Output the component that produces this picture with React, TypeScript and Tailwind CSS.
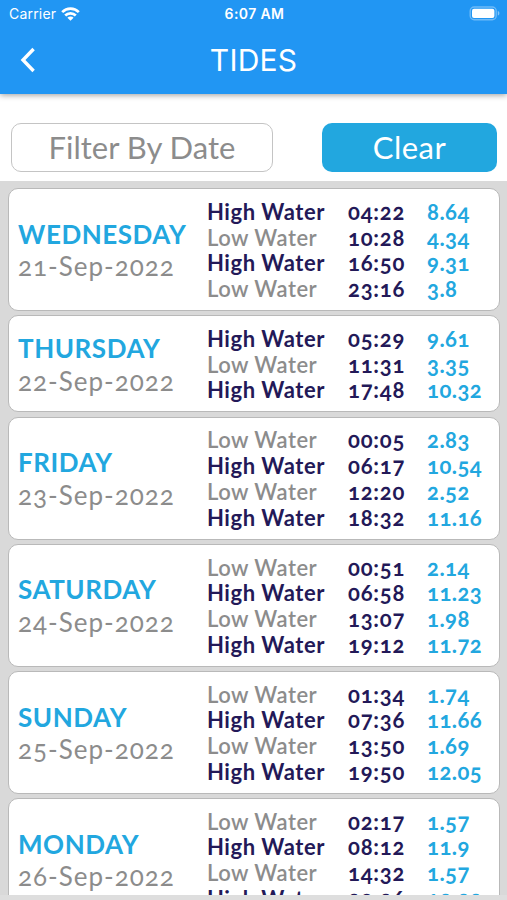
import React from 'react';

type Tide = { time: string; height: string; high: boolean };
type TideDay = { day: string; date: string; tides: Tide[] };

const tideDays: TideDay[] = [
    {
        day: 'WEDNESDAY', date: '21-Sep-2022', tides: [
            { time: '04:22', height: '8.64', high: true },
            { time: '10:28', height: '4.34', high: false },
            { time: '16:50', height: '9.31', high: true },
            { time: '23:16', height: '3.8', high: false },
        ]
    },
    {
        day: 'THURSDAY', date: '22-Sep-2022', tides: [
            { time: '05:29', height: '9.61', high: true },
            { time: '11:31', height: '3.35', high: false },
            { time: '17:48', height: '10.32', high: true },
        ]
    },
    {
        day: 'FRIDAY', date: '23-Sep-2022', tides: [
            { time: '00:05', height: '2.83', high: false },
            { time: '06:17', height: '10.54', high: true },
            { time: '12:20', height: '2.52', high: false },
            { time: '18:32', height: '11.16', high: true },
        ]
    },
    {
        day: 'SATURDAY', date: '24-Sep-2022', tides: [
            { time: '00:51', height: '2.14', high: false },
            { time: '06:58', height: '11.23', high: true },
            { time: '13:07', height: '1.98', high: false },
            { time: '19:12', height: '11.72', high: true },
        ]
    },
    {
        day: 'SUNDAY', date: '25-Sep-2022', tides: [
            { time: '01:34', height: '1.74', high: false },
            { time: '07:36', height: '11.66', high: true },
            { time: '13:50', height: '1.69', high: false },
            { time: '19:50', height: '12.05', high: true },
        ]
    },
    {
        day: 'MONDAY', date: '26-Sep-2022', tides: [
            { time: '02:17', height: '1.57', high: false },
            { time: '08:12', height: '11.9', high: true },
            { time: '14:32', height: '1.57', high: false },
            { time: '20:26', height: '12.22', high: true },
        ]
    },
];

const StatusBar = () => (
    <div className="flex h-[27px] items-center justify-between pl-[9px] pr-[7px] text-[14px] leading-none">
        <div className="flex w-[100px] items-center gap-[5px]">
            <span className="tracking-[0.2px]">Carrier</span>
            <svg width="19" height="14" viewBox="0 0 19 14" fill="none" stroke="white" strokeWidth="2.7">
                <path d="M1.2 5.1a11.8 11.8 0 0 1 16.6 0" />
                <path d="M4.2 8.5a7.5 7.5 0 0 1 10.6 0" />
                <path d="M9.5 13.8 6.4 10.7a4.4 4.4 0 0 1 6.2 0z" fill="white" stroke="none" />
            </svg>
        </div>
        <span className="font-semibold tracking-[0.4px]">6:07 AM</span>
        <div className="flex w-[100px] justify-end">
            <svg width="31" height="15" viewBox="0 0 31 15">
                <rect x="1.2" y="1" width="26" height="12.8" rx="4" fill="none" stroke="white" strokeOpacity="0.35" strokeWidth="1.4" />
                <rect x="3" y="2.8" width="22.4" height="9.2" rx="2" fill="white" />
                <path d="M28.8 5v4.6c1-.4 1.6-1.2 1.6-2.3s-.6-1.9-1.6-2.3z" fill="white" fillOpacity="0.45" />
            </svg>
        </div>
    </div>
);

const TideCard = ({ day, date, tides }: TideDay) => (
    <div className="flex shrink-0 items-center rounded-[10px] border border-[#b9b9b9] bg-white pb-[8.3px] pl-[9px] pt-[9.7px]">
        <div className="w-[189px] whitespace-nowrap text-[26px] leading-[32.5px]">
            <div className="font-bold tracking-[0.55px] text-[#22a7df]">{day}</div>
            <div className="tracking-[1px] text-[#8c8c8c]">{date}</div>
        </div>
        <div className="flex-1 text-[22px] font-bold leading-[25.7px]">
            {tides.map((tide) => (
                <div key={tide.time} className="flex whitespace-nowrap tracking-[0.5px]">
                    <span className={tide.high ? 'w-[141px] tracking-[0.55px] text-[#231958]' : 'w-[141px] font-semibold tracking-[0.5px] text-[#8c8c8c]'}>
                        {tide.high ? 'High Water' : 'Low Water'}
                    </span>
                    <span className="w-[79px] tracking-[0.8px] text-[#231958]">{tide.time}</span>
                    <span className="text-[#22a7df]">{tide.height}</span>
                </div>
            ))}
        </div>
    </div>
);

const App: React.FC = () => {
    return (
        <div className="flex h-[900px] w-[507px] flex-col overflow-hidden bg-white font-['Lato',sans-serif] oldstyle-nums">
            <header className="z-10 h-[94px] shrink-0 bg-[#2196f3] font-['Inter',sans-serif] text-white lining-nums shadow-[0_1px_6px_rgba(0,0,0,0.4)]">
                <StatusBar />
                <div className="flex h-[66px] items-center px-[20px]">
                    <svg width="16" height="26" viewBox="0 0 16 26" fill="none" stroke="white" strokeWidth="3.4">
                        <path d="M13.6 2 3 13l10.6 11" />
                    </svg>
                    <h1 className="flex-1 pr-[16px] text-center text-[30px] tracking-[0.2px]">TIDES</h1>
                </div>
            </header>

            <div className="flex h-[87px] shrink-0 items-start justify-between pl-[11px] pr-[10px] pt-[29px] text-[31px]">
                <button className="h-[49px] w-[262px] rounded-[10px] border border-[#c4c4c4] text-[#8c8c8c]">Filter By Date</button>
                <button className="h-[49px] w-[175px] rounded-[10px] bg-[#22a7df] tracking-[0.5px] text-white">Clear</button>
            </div>

            <div className="h-[714px] shrink-0 overflow-hidden bg-[#d9d9d9] pl-[8px] pr-[7px] pt-[7.3px]">
                <div className="flex flex-col gap-[4.3px]">
                    {tideDays.map((d) => (
                        <TideCard key={d.date} {...d} />
                    ))}
                </div>
            </div>
            <div className="h-[5px] shrink-0 bg-[#dedede]" />
        </div>
    );
};

export default App;
